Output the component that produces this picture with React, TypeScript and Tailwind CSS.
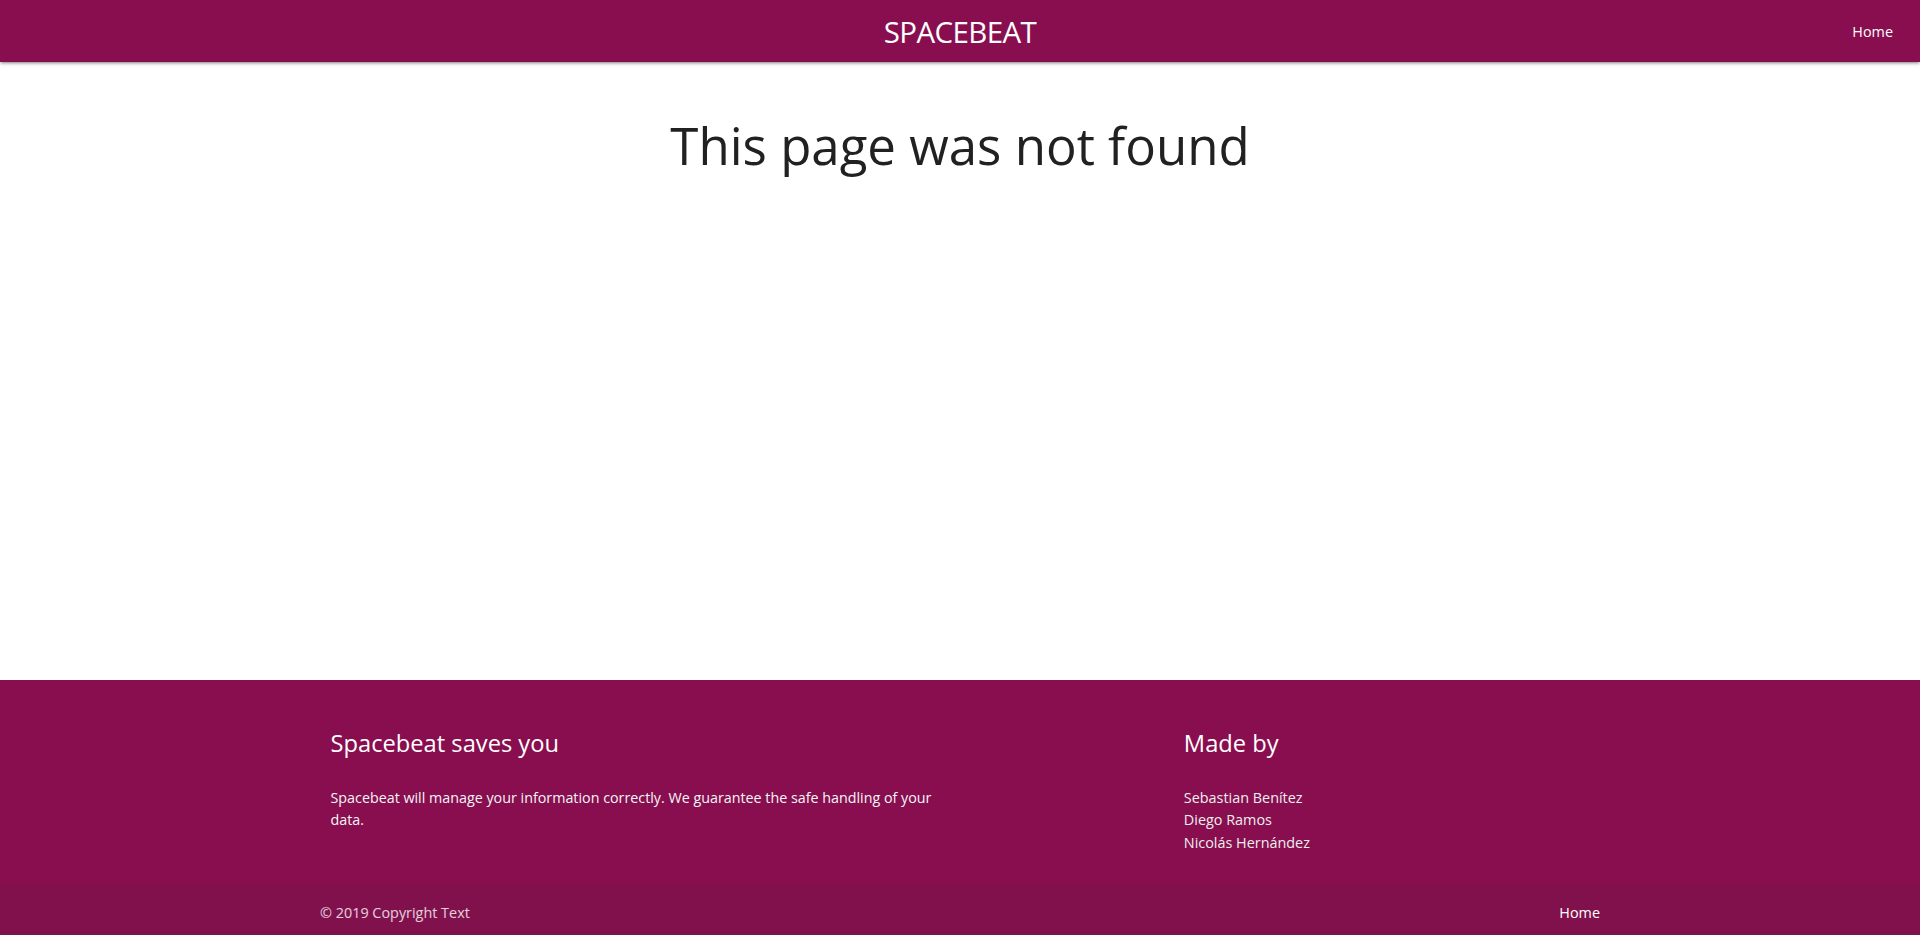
import React from "react";

const NotFoundPage = () => {
  return (
    <div className="min-h-screen flex flex-col bg-white font-['Open_Sans',sans-serif]">
      <header className="relative z-10 h-[62px] bg-[#880e4f] grid grid-cols-[1fr_auto_1fr] items-center shadow-[0_2px_2px_0_rgba(0,0,0,0.14),0_3px_1px_-2px_rgba(0,0,0,0.12),0_1px_5px_0_rgba(0,0,0,0.2)]">
        <div />
        <a href="#" className="pt-[2px] text-white text-[29.5px] tracking-[-0.6px] leading-none">
          SPACEBEAT
        </a>
        <nav className="justify-self-end pr-[12px]">
          <a href="#" className="px-[15px] text-white text-[14.4px]">
            Home
          </a>
        </nav>
      </header>

      <main className="flex-1">
        <h2 className="mt-[55px] text-center text-[51px] leading-[1.1] text-[#212121]">
          This page was not found
        </h2>
      </main>

      <footer className="bg-[#880e4f] pt-[20px] text-white">
        <div className="w-[1280px] mx-auto grid grid-cols-12 pb-[31px]">
          <div className="col-span-6 px-[10.5px]">
            <h5 className="text-[23.7px] leading-[1.1] mt-[30px] mb-[30px]">
              Spacebeat saves you
            </h5>
            <p className="text-[14.3px] leading-[22.5px] text-[#f5f5f5]">
              Spacebeat will manage your information correctly. We guarantee the
              safe handling of your data.
            </p>
          </div>
          <div className="col-span-4 col-start-9 px-[10.5px]">
            <h5 className="text-[23.7px] leading-[1.1] mt-[30px] mb-[30px]">
              Made by
            </h5>
            <ul className="text-[14.4px] leading-[22.5px] text-[#eeeeee]">
              <li>Sebastian Benítez</li>
              <li>Diego Ramos</li>
              <li>Nicolás Hernández</li>
            </ul>
          </div>
        </div>
        <div className="h-[50px] bg-[#81114d] text-white/80">
          <div className="w-[1280px] h-full mx-auto pt-[5px] flex items-center justify-between text-[14.4px]">
            <span>© 2019 Copyright Text</span>
            <a href="#" className="text-white">
              Home
            </a>
          </div>
        </div>
      </footer>
    </div>
  );
};

export default function App() {
  return <NotFoundPage />;
}
